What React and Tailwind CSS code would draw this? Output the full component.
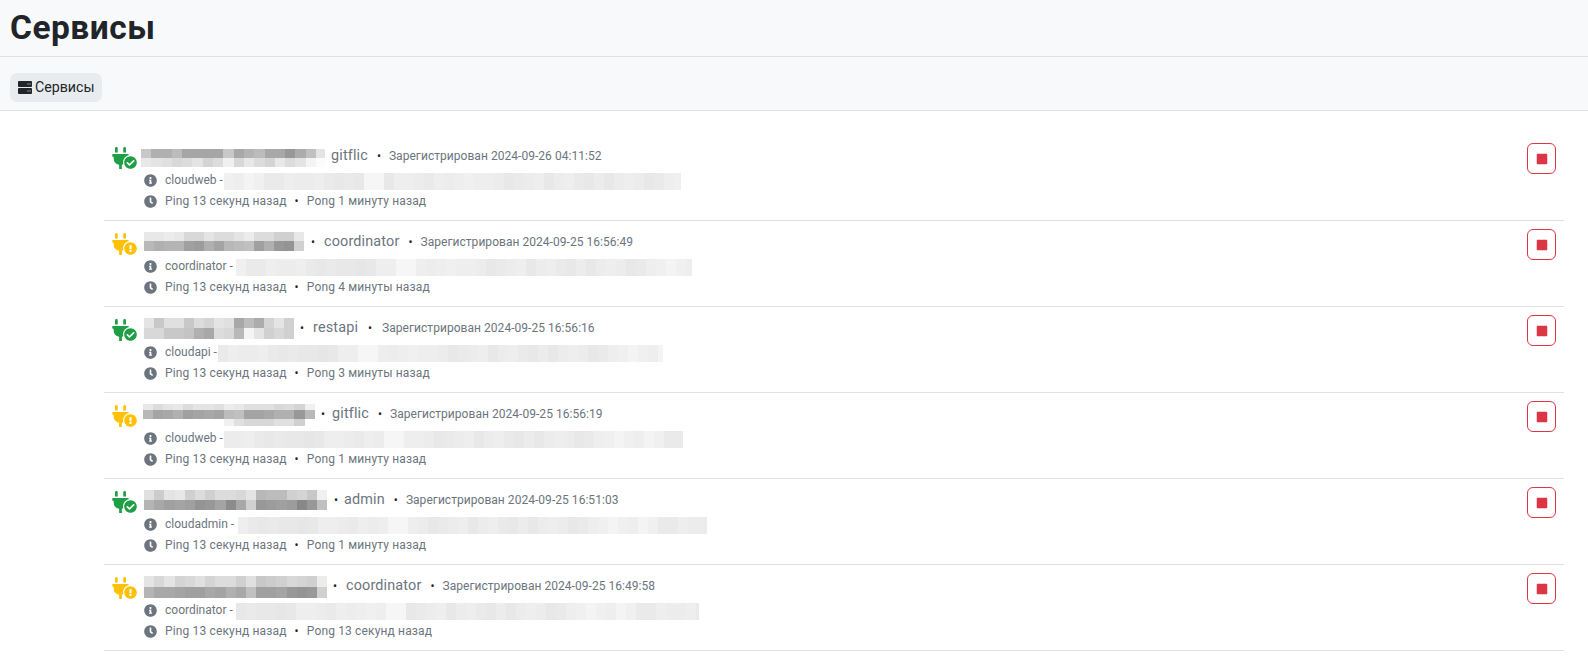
import React from "react";
import {
  FaCheckCircle,
  FaClock,
  FaExclamationCircle,
  FaInfoCircle,
  FaPlug,
  FaStop,
} from "react-icons/fa";

// pixelated (censored) pieces of the screenshot: one string per band, two hex digits per cell
const parse = (s) => s.split(" ");

const services = [
  {
    ok: true,
    blur: { ml: 3, w: 184, h: 18, mt: 4, cell: 10.3, bands: [
      [9, "c8 b0 b0 bc a6 a6 a6 a6 c8 a8 b4 bc a8 a8 98 ac c0 e4"],
      [9, "e8 e4 e0 d8 dc e4 d4 dc f0 d8 e8 dc d4 e8 dc e4 f4 fc"],
    ] },
    sep: false,
    nameMl: 6,
    name: "gitflic",
    date: "2024-09-26 04:11:52",
    app: "cloudweb",
    long: { ml: 1, w: 457, gap: 14, shift: 0 },
    pong: "Pong 1 минуту назад",
  },
  {
    ok: false,
    blur: { ml: 6, w: 161, h: 19, mt: 0, cell: 10, bands: [
      [9, "e8 e8 ec e8 d8 d8 e4 dc dc e4 ec dc dc d0 d0 e8"],
      [10, "b8 b0 b4 b4 a0 9c b0 a4 b8 bc c0 a0 b0 98 94 d0"],
    ] },
    sep: true,
    nameMl: 9,
    name: "coordinator",
    date: "2024-09-25 16:56:49",
    app: "coordinator",
    long: { ml: 3, w: 456, gap: 16, shift: 3 },
    pong: "Pong 4 минуты назад",
  },
  {
    ok: true,
    blur: { ml: 6, w: 150, h: 21, mt: 1, cell: 10, bands: [
      [10, "e4 c8 e0 e0 c8 dc d4 e4 e0 a8 bc ac d4 e4 d0"],
      [11, "d8 d8 c8 c8 c4 b0 a8 dc d8 b8 f4 e4 d0 d8 d0"],
    ] },
    sep: true,
    nameMl: 9,
    dotMl: 10,
    dateMl: 10,
    name: "restapi",
    date: "2024-09-25 16:56:16",
    app: "cloudapi",
    long: { ml: 1, w: 445, gap: 14, shift: 5 },
    pong: "Pong 3 минуты назад",
  },
  {
    ok: false,
    blur: { ml: 5, w: 172, h: 22, mt: 2, cell: 10.1, bands: [
      [6, "e8 dc e4 e8 dc e4 e4 e0 ec e8 e0 e0 e0 d8 dc d4 f0"],
      [9, "b8 a4 a8 b0 a0 a4 a8 a4 bc c0 a4 a4 a8 b0 b0 98 b8"],
      [7, "ff ff ff ff ff ff ff ff f0 e0 d8 d8 d8 e0 e0 d0 ff"],
    ] },
    sep: true,
    nameMl: 7,
    name: "gitflic",
    date: "2024-09-25 16:56:19",
    app: "cloudweb",
    long: { ml: 1, w: 459, gap: 16, shift: 7 },
    pong: "Pong 1 минуту назад",
  },
  {
    ok: true,
    blur: { ml: 6, w: 184, h: 20, mt: 0, cell: 10.2, bands: [
      [10, "e0 cc e4 e8 d0 dc d0 dc dc d8 e4 b8 bc bc d0 d4 c8 f0"],
      [10, "b4 a8 a0 a4 a0 94 98 a4 8c a8 d0 98 9c a0 9c 88 98 c0"],
    ] },
    sep: true,
    nameMl: 6,
    name: "admin",
    date: "2024-09-25 16:51:03",
    app: "cloudadmin",
    long: { ml: 4, w: 469, gap: 15, shift: 9 },
    pong: "Pong 1 минуту назад",
  },
  {
    ok: false,
    blur: { ml: 6, w: 183, h: 22, mt: 2, cell: 10.2, bands: [
      [11, "e4 d8 e4 d4 d8 e0 d4 dc dc d0 e0 c8 cc d0 d8 d4 d0 ec"],
      [11, "b4 a8 a8 a4 a0 a0 a8 a4 b0 a8 c0 a0 a0 a4 98 94 98 d0"],
    ] },
    sep: true,
    nameMl: 9,
    name: "coordinator",
    date: "2024-09-25 16:49:58",
    app: "coordinator",
    long: { ml: 3, w: 463, gap: 15, shift: 11 },
    pong: "Pong 13 секунд назад",
  },
];

const longCells = parse(
  "f0 ee f4 f0 ea ea ee ec ec ee ea e8 ea e8 e8 e6 e8 ee ee ec ea ee ec ee f0 ee ee ec e8 ea ec ee e8 ec ee ea e8 ec e8 ec ee ec e8 ea ee f0 f4"
);

const Pixels = ({ blur }) => (
  <div
    className="flex shrink-0 flex-col overflow-hidden"
    style={{ width: blur.w, height: blur.h, marginTop: blur.mt, marginLeft: blur.ml }}
  >
    {blur.bands.map(([height, cells], i) => (
      <div key={i} className="flex" style={{ height }}>
        {parse(cells).map((c, j) => (
          <div key={j} className="shrink-0" style={{ width: blur.cell, background: `#${c}${c}${c}` }} />
        ))}
      </div>
    ))}
  </div>
);

const LongPixels = ({ long }) => (
  <div
    className="mt-[2px] flex h-[17px] shrink-0 overflow-hidden"
    style={{ width: long.w, marginLeft: long.ml }}
  >
    {longCells.concat(longCells).slice(long.shift, long.shift + 47).map((c, j) => {
      const v = j === long.gap || j === long.gap + 1 ? "f6" : c;
      return <div key={j} className="w-[10px] shrink-0" style={{ background: `#${v}${v}${v}` }} />;
    })}
  </div>
);

const Dot = ({ ml = 8 }) => (
  <span className="text-[12px] text-[#212529]" style={{ marginLeft: ml }}>
    •
  </span>
);

const StatusIcon = ({ ok }) => {
  const color = ok ? "text-[#1e9e45]" : "text-[#ffc107]";
  const Badge = ok ? FaCheckCircle : FaExclamationCircle;
  return (
    <div className={`relative h-[24px] w-[26px] shrink-0 ${color}`}>
      <FaPlug className="absolute left-0 top-[3px] h-[22px] w-[17px]" />
      <span className="absolute left-[11px] top-[11px] flex h-[15px] w-[15px] items-center justify-center rounded-full bg-white">
        <Badge className="h-[13px] w-[13px]" />
      </span>
    </div>
  );
};

const ServerIcon = () => (
  <svg viewBox="0 0 14 13" className="h-[13px] w-[14px] shrink-0" fill="currentColor">
    <path d="M1 0h12a1 1 0 0 1 1 1v4a1 1 0 0 1-1 1H1a1 1 0 0 1-1-1V1a1 1 0 0 1 1-1zm8.5 2.5v1h1v-1zm2 0v1h1v-1z" fillRule="evenodd" />
    <path d="M1 7h12a1 1 0 0 1 1 1v4a1 1 0 0 1-1 1H1a1 1 0 0 1-1-1V8a1 1 0 0 1 1-1zm8.5 2.5v1h1v-1zm2 0v1h1v-1z" fillRule="evenodd" />
  </svg>
);

const ServiceRow = ({ s }) => {
  return (
    <div className="flex h-[86px] items-start justify-between border-b border-[#dee2e6] pr-[8px]">
      <div className="flex flex-col pl-[8px] pt-[9px]">
        <div className="flex h-[24px] items-center">
          <StatusIcon ok={s.ok} />
          <div className="flex items-center">
            <Pixels blur={s.blur} />
            {s.sep && <Dot ml={6} />}
            <span className="text-[14.4px] tracking-[0.15px] text-[#6c757d]" style={{ marginLeft: s.nameMl }}>
              {s.name}
            </span>
            <Dot ml={s.dotMl || 9} />
            <span
              className="text-[12px] tracking-[0.04px] text-[#6c757d]"
              style={{ marginLeft: s.dateMl || 8 }}
            >
              Зарегистрирован {s.date}
            </span>
          </div>
        </div>
        <div className="mt-[2px] flex h-[20px] items-center pl-[32px] text-[12px] text-[#6c757d]">
          <FaInfoCircle className="h-[13px] w-[13px] shrink-0" />
          <span className="ml-[8px]">{s.app} -</span>
          <LongPixels long={s.long} />
        </div>
        <div className="mt-[1px] flex h-[20px] items-center pl-[32px] text-[12px] tracking-[0.15px] text-[#6c757d]">
          <FaClock className="h-[13px] w-[13px] shrink-0" />
          <span className="ml-[8px]">Ping 13 секунд назад</span>
          <Dot />
          <span className="ml-[8px]">{s.pong}</span>
        </div>
      </div>
      <button className="mt-[8px] flex h-[31px] w-[29px] items-center justify-center rounded-[6px] border border-[#dc3545] text-[#dc3545]">
        <FaStop className="h-[12px] w-[12px]" />
      </button>
    </div>
  );
};

const App = () => {
  return (
    <div className="min-h-[660px] overflow-hidden bg-white font-['Roboto',sans-serif] text-[#212529]">
      <header className="flex h-[57px] items-center border-b border-[#dee2e6] bg-[#f8f9fa] px-[10px]">
        <h1 className="text-[33.5px] font-bold leading-none tracking-[0.5px]">Сервисы</h1>
      </header>
      <nav className="flex h-[54px] items-start border-b border-[#dee2e6] bg-[#f8f9fa] px-[10px] pt-[16px]">
        <a className="flex h-[29px] w-[92px] items-center gap-[3px] rounded-[7px] bg-[#e9ecef] pl-[8px] text-[14.2px]">
          <ServerIcon />
          Сервисы
        </a>
      </nav>
      <main className="ml-[104px] mr-[24px] pt-[24px]">
        {services.map((s) => (
          <ServiceRow key={s.date} s={s} />
        ))}
      </main>
    </div>
  );
};

export default App;
